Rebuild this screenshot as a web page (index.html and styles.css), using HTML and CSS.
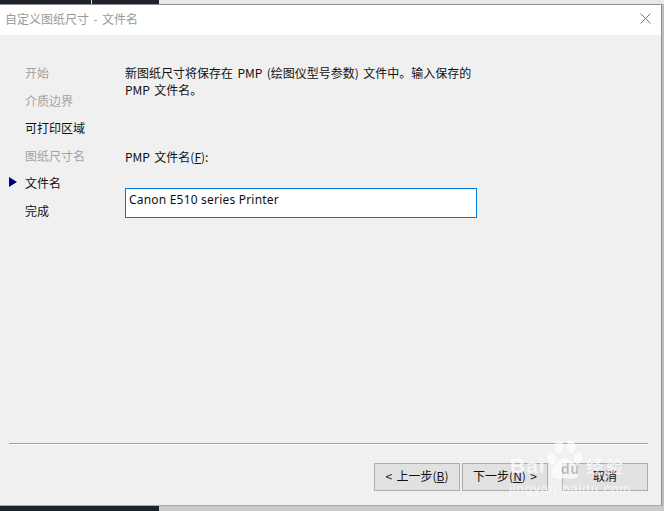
FILE: index.html
```html
<!DOCTYPE html>
<html lang="zh">
<head>
<meta charset="utf-8">
<title>自定义图纸尺寸 - 文件名</title>
<link rel="stylesheet" href="styles.css">
</head>
<body>
<div class="desktop">
  <div class="top-strip">
    <div class="strip-dark"><span class="strip-a"></span><span class="strip-b"></span></div>
    <div class="strip-light"></div>
  </div>
  <div class="window">
    <header class="titlebar">
      <span class="title">自定义图纸尺寸 - 文件名</span>
      <svg class="close" width="11" height="11" viewBox="0 0 11 11"><path d="M.5.5l10 10M10.5.5l-10 10" stroke="#777" fill="none"/></svg>
    </header>
    <main class="body">
      <nav class="steps">
        <div class="step muted">开始</div>
        <div class="step muted">介质边界</div>
        <div class="step">可打印区域</div>
        <div class="step muted">图纸尺寸名</div>
        <div class="step current">文件名</div>
        <div class="step">完成</div>
      </nav>
      <section class="content">
        <p class="intro">新图纸尺寸将保存在 PMP (绘图仪型号参数) 文件中。输入保存的<br>PMP 文件名。</p>
        <label class="field-label">PMP 文件名(<u>F</u>):</label>
        <div class="input">Canon E510 series Printer</div>
      </section>
    </main>
    <footer class="footer">
      <div class="rule"></div>
      <div class="buttons">
        <button class="btn">&lt; 上一步(<u>B</u>)</button>
        <button class="btn">下一步(<u>N</u>) &gt;</button>
        <button class="btn btn-cancel">取消</button>
      </div>
    </footer>
    <div class="watermark">
      <svg class="wm-paw" width="40" height="44" viewBox="0 0 40 44">
        <ellipse cx="7" cy="18" rx="4.5" ry="6" transform="rotate(-15 7 18)"/>
        <ellipse cx="14" cy="7" rx="4.5" ry="6.5"/>
        <ellipse cx="26" cy="7" rx="4.5" ry="6.5"/>
        <ellipse cx="33" cy="18" rx="4.5" ry="6" transform="rotate(15 33 18)"/>
        <path d="M20 18c6 0 8 5 12 9 4 5 2 12-5 12-3 0-5-1-7-1s-4 1-7 1c-7 0-9-7-5-12 4-4 6-9 12-9z"/>
      </svg>
      <span class="wm-bai">Bai</span>
      <span class="wm-du">du</span>
      <span class="wm-jy">经验</span>
      <span class="wm-url">jingyan.baidu.com</span>
    </div>
  </div>
  <div class="bottom-strip">
    <div class="strip-dark"></div>
    <div class="strip-gray"></div>
  </div>
</div>
</body>
</html>
```
FILE: styles.css
```css
* { box-sizing: border-box; }
html, body { margin: 0; padding: 0; }
body { width: 664px; height: 511px; overflow: hidden; font-family: "Noto Sans CJK SC", "Liberation Sans", sans-serif; font-size: 12px; color: #111; word-spacing: 1.7px; }
.desktop { display: flex; flex-direction: column; width: 664px; height: 511px; background: #bdbdbd; }
.top-strip { display: flex; height: 4px; flex: none; }
.strip-dark { display: flex; width: 159px; background: #1d222b; }
.strip-a { width: 92px; border-right: 1px solid #ddd; }
.strip-light { flex: 1; background: #e8e8e8; }
.window { position: relative; flex: none; width: 662px; height: 502px; background: #f0f0f0; border: 1px solid #8f8f8f; border-left: 0; border-bottom: 1px solid #aaa; display: flex; flex-direction: column; }
.titlebar { height: 30px; flex: none; background: #fff; display: flex; align-items: center; justify-content: space-between; padding: 0 10px 3px 5px; }
.title { color: #999; font-size: 12px; }
.body { flex: 1; display: flex; }
.steps { width: 125px; padding: 24px 0 0 25px; flex: none; display: flex; flex-direction: column; }
.step { height: 27.6px; line-height: 27.6px; position: relative; }
.muted { color: #a3a3a3; }
.current::before { content: ""; position: absolute; left: -16px; top: 8px; border-left: 8px solid #000080; border-top: 5px solid transparent; border-bottom: 5px solid transparent; }
.content { flex: 1; padding-top: 29px; }
.intro { margin: 0; line-height: 17px; width: 352px; }
.field-label { display: block; margin-top: 50px; line-height: 17px; }
.input { margin-top: 23px; width: 352px; height: 30px; border: 1px solid #0078d7; background: #fff; padding: 2px 3px; line-height: 17px; font-family: "Noto Sans", "Noto Sans CJK SC", sans-serif; letter-spacing: .2px; word-spacing: 0; }
.footer { flex: none; height: 62px; padding: 0 13px 0 9px; }
.rule { height: 2px; border-top: 1px solid #a0a0a0; border-bottom: 1px solid #fff; }
.buttons { display: flex; justify-content: flex-end; gap: 2px; margin-top: 18px; }
.btn { width: 86px; height: 28px; background: #e1e1e1; border: 1px solid #adadad; padding: 0 0 3px; font: inherit; color: #111; word-spacing: 1.7px; }
.btn-cancel { margin-left: 12px; }
.watermark { position: absolute; left: 505px; top: 433px; width: 130px; height: 60px; color: #fff; opacity: .7; word-spacing: 0; }
.wm-paw { position: absolute; left: 40px; top: 2px; fill: #fff; }
.wm-bai, .wm-du, .wm-jy, .wm-url { position: absolute; white-space: nowrap; }
.wm-bai { left: 5px; top: 15px; font: 700 21px/26px "Liberation Sans", sans-serif; letter-spacing: 1px; }
.wm-du { left: 56px; top: 23px; font: 700 14px/16px "Liberation Sans", sans-serif; letter-spacing: 1px; color: #b0b0b0; }
.wm-jy { left: 81px; top: 15px; font: 500 17px/26px "Noto Sans CJK SC", sans-serif; letter-spacing: 3px; }
.wm-url { left: 4px; top: 44px; font: 400 13.5px/14px "Liberation Sans", sans-serif; letter-spacing: .8px; }
.bottom-strip { display: flex; flex: 1; }
.strip-gray { flex: 1; background: #c9c9c9; }
```
